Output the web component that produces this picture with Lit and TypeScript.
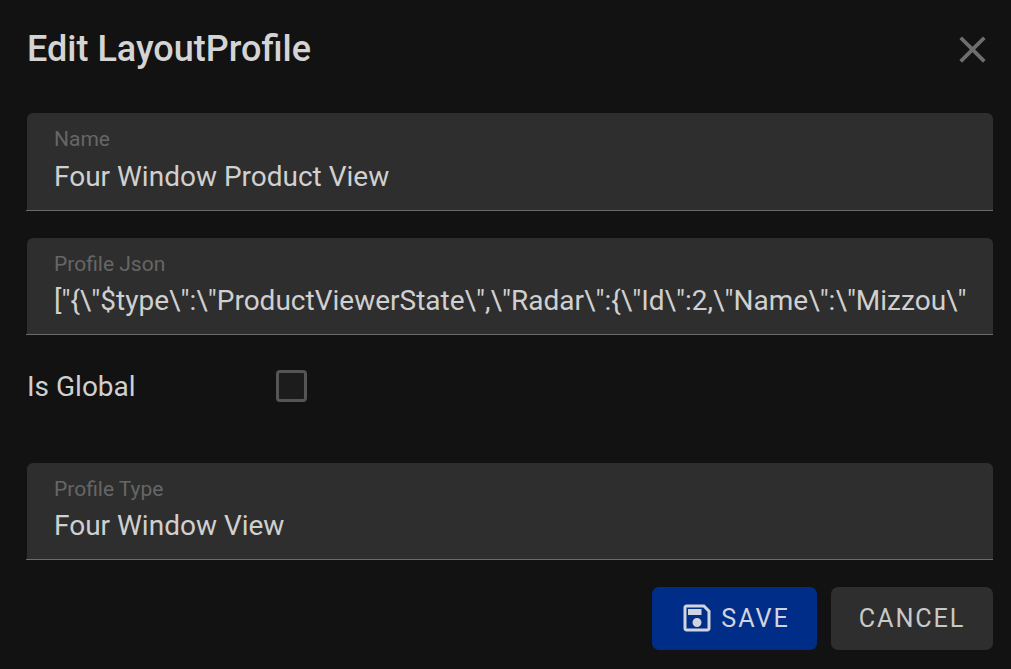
import { LitElement, html, css } from "lit";
import { customElement } from "lit/decorators.js";

@customElement("app-root")
export class AppRoot extends LitElement {
  static styles = css`
    :host { display: block; width: 1011px; height: 669px; background: #121212; font-family: Roboto, "Liberation Sans", sans-serif; color: #d0d0d0; overflow: hidden; box-sizing: border-box; }
    .dialog { display: flex; flex-direction: column; padding: 0 18px 0 27px; }
    .head { display: flex; justify-content: space-between; align-items: center; height: 113.4px; padding-bottom: 16px; box-sizing: border-box; }
    h1 { margin: 0; font-size: 36px; font-weight: 500; line-height: 1; color: #d4d4d4; }
    .close { width: 45px; height: 45px; fill: #6e6e6e; display: block; margin-right: -2px; margin-top: 2px; }
    .field { position: relative; height: 97.3px; box-sizing: border-box; background: #2e2e2e; border-radius: 6px 6px 0 0; padding: 14px 27px 0 27px; }
    .field::after { content: ""; position: absolute; left: -1px; right: 0; bottom: 0; height: 1px; background: #6b6b6b; }
    .label { font-size: 21px; line-height: 24px; color: #666; }
    .value { font-size: 28px; line-height: 38px; margin-top: 6.2px; white-space: nowrap; color: #d0d0d0; }
    .gap { height: 27.3px; }
    .check { display: flex; align-items: center; height: 100px; box-sizing: border-box; margin-bottom: 27.7px; }
    .check span { font-size: 28px; width: 249px; padding-top: 2px; }
    .box { width: 31px; height: 32px; margin-top: 2px; box-sizing: border-box; border: 3px solid #555; border-radius: 4px; background: #1c1c1c; }
    .actions { display: flex; justify-content: flex-end; gap: 14px; margin-top: 26.7px; }
    .btn { height: 63px; border-radius: 7px; display: flex; align-items: center; justify-content: center; font-size: 25.2px; letter-spacing: 1.9px; font-weight: 400; box-sizing: border-box; }
    .save { width: 165px; background: #002d88; color: #d0d4de; gap: 6px; }
    .save svg { width: 36px; height: 36px; fill: #d0d4de; display: block; }
    .cancel { width: 162px; background: #2e2e2e; color: #c8c8c8; }
  `;

  render() {
    return html`
      <div class="dialog">
        <div class="head">
          <h1>Edit LayoutProfile</h1>
          <svg class="close" viewBox="0 0 24 24"><path d="M19 6.41 17.59 5 12 10.59 6.41 5 5 6.41 10.59 12 5 17.59 6.41 19 12 13.41 17.59 19 19 17.59 13.41 12z"></path></svg>
        </div>
        <div class="field"><div class="label">Name</div><div class="value">Four Window Product View</div></div>
        <div class="gap"></div>
        <div class="field"><div class="label">Profile Json</div><div class="value">["{\\"$type\\":\\"ProductViewerState\\",\\"Radar\\":{\\"Id\\":2,\\"Name\\":\\"Mizzou\\"</div></div>
        <div class="check"><span>Is Global</span><div class="box"></div></div>
        <div class="field"><div class="label">Profile Type</div><div class="value">Four Window View</div></div>
        <div class="actions">
          <div class="btn save"><svg viewBox="0 0 24 24"><path d="M17 3H5c-1.11 0-2 .9-2 2v14c0 1.1.89 2 2 2h14c1.1 0 2-.9 2-2V7l-4-4zm2 16H5V5h11.17L19 7.83V19zm-7-7c-1.66 0-3 1.34-3 3s1.34 3 3 3 3-1.34 3-3-1.34-3-3-3zM6 6h9v4H6z"></path></svg>SAVE</div>
          <div class="btn cancel">CANCEL</div>
        </div>
      </div>
    `;
  }
}
